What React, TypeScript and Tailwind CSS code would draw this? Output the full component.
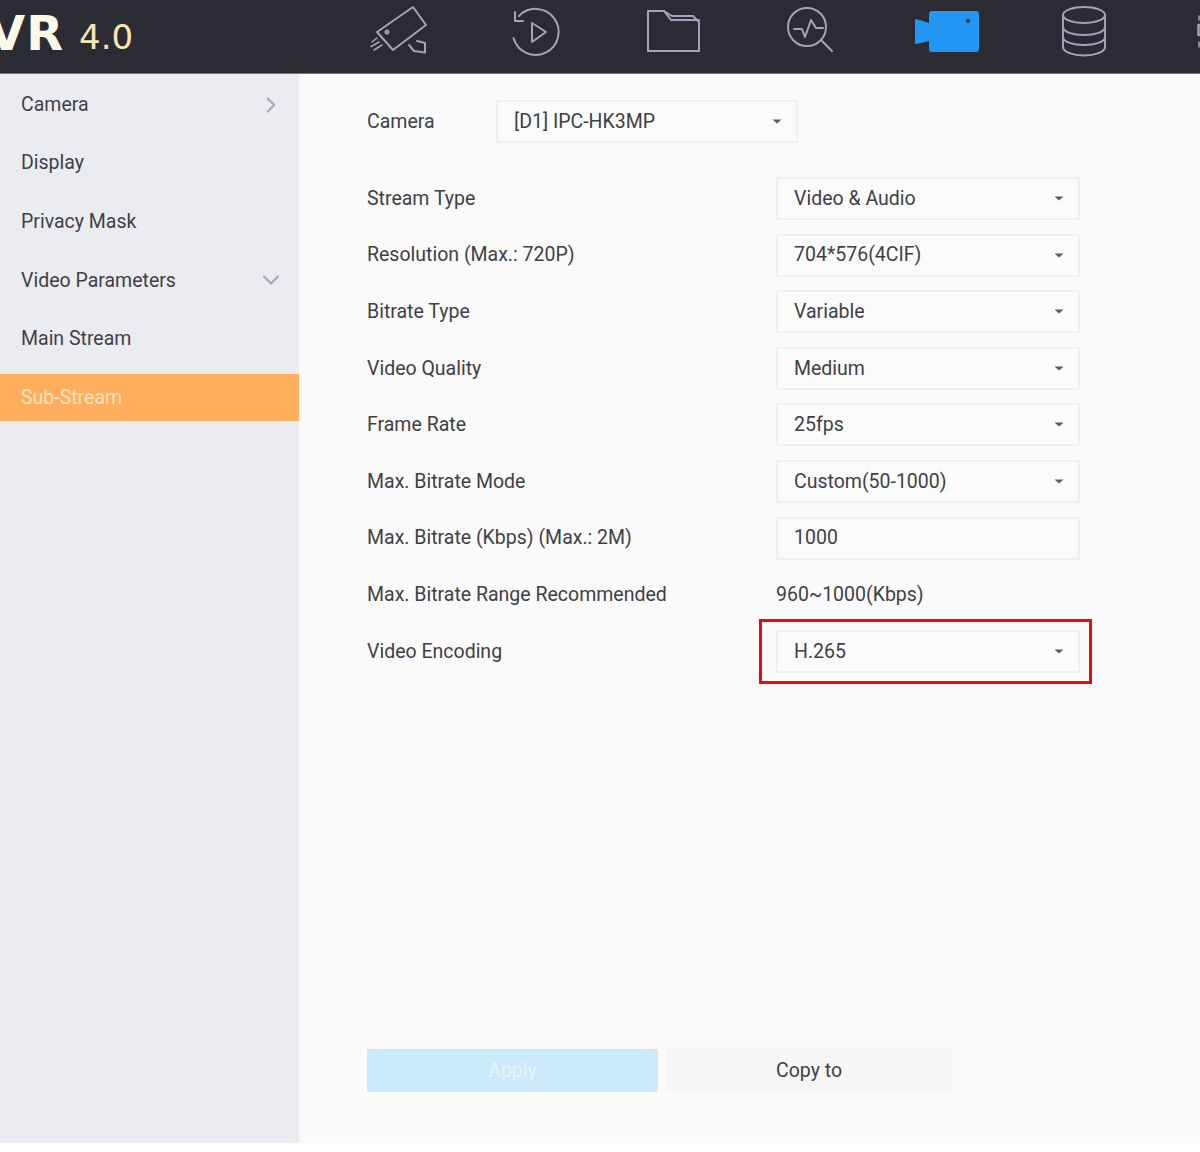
import React from "react";
import { ChevronRight, ChevronDown } from "lucide-react";

const S = "#a3a3ba";

function Cell({ cx, children }: { cx: number; children: React.ReactNode }) {
  return (
    <div className="w-[137px] h-[74px] shrink-0 flex items-center justify-center">
      <svg width="70" height="74" viewBox={`${cx - 35} 0 70 74`} fill="none" stroke={S} strokeWidth="2" strokeLinejoin="round" strokeLinecap="round">
        {children}
      </svg>
    </div>
  );
}

function Caret() {
  return (
    <svg width="10" height="5" viewBox="0 0 10 5" className="shrink-0">
      <path d="M0.5 0.5H9.5L5 4.5Z" fill="#5c5c63" />
    </svg>
  );
}

function Select({ value, caret = true, className }: { value: string; caret?: boolean; className: string }) {
  return (
    <div className={`h-[43px] flex items-center justify-between pl-[16px] pr-[14px] border-2 border-[#efefef] bg-[#fbfbfb] ${className}`}>
      <span>{value}</span>
      {caret && <Caret />}
    </div>
  );
}

const rows: [string, string, "select" | "input" | "text"][] = [
  ["Stream Type", "Video & Audio", "select"],
  ["Resolution (Max.: 720P)", "704*576(4CIF)", "select"],
  ["Bitrate Type", "Variable", "select"],
  ["Video Quality", "Medium", "select"],
  ["Frame Rate", "25fps", "select"],
  ["Max. Bitrate Mode", "Custom(50-1000)", "select"],
  ["Max. Bitrate (Kbps) (Max.: 2M)", "1000", "input"],
  ["Max. Bitrate Range Recommended", "960~1000(Kbps)", "text"],
];

const menu = ["Camera", "Display", "Privacy Mask", "Video Parameters", "Main Stream"];

export default function App() {
  return (
    <div className="w-[1200px] h-[1152px] bg-white flex flex-col overflow-hidden text-[#3f3f47] text-[19.5px] font-['Roboto','Liberation_Sans',sans-serif]">
      <header className="h-[74px] shrink-0 bg-[#2b2b33] border-b border-[#77777f] flex overflow-hidden">
        <div className="w-[330px] shrink-0 overflow-hidden flex items-center">
          <span className="ml-[-12px] text-[48px] leading-none font-bold text-[#fdf9e8] font-['DejaVu_Sans',sans-serif] tracking-[1px] mt-[-7px]">VR</span>
          <span className="ml-[15px] text-[34px] leading-none text-[#f9e4b8] font-['DejaVu_Sans',sans-serif]">4.0</span>
        </div>
        <Cell cx={398}>
          <path d="M376 32L412 7L425 25L392 50Z" />
          <circle cx="386" cy="32" r="1.5" />
          <path d="M408 45L413 51L424 52.500V43L416 41" />
          <path d="M371 42L376 38M370 46.500L378 42M373 50L381 45" strokeWidth="1.6" />
        </Cell>
        <Cell cx={536}>
          <path d="M519 16A23 23 0 1 1 513.500 38" />
          <path d="M515 12V21H523" />
          <path d="M532 23L546 32L532 42Z" />
        </Cell>
        <Cell cx={673}>
          <path d="M648 11H664L672 16H693L699 22V51H648Z" />
          <path d="M664 11L671 20H699" />
        </Cell>
        <Cell cx={809}>
          <circle cx="806" cy="27" r="19" />
          <path d="M821 41L831 51" />
          <path d="M793 29H801L804 37L810 20L815 28H822" />
        </Cell>
        <Cell cx={946}>
          <path d="M915 20L928 24V40L915 43Z" fill="#2196f3" stroke="#2196f3" />
          <rect x="928" y="11" width="50" height="41" rx="3" fill="#2196f3" stroke="none" />
          <circle cx="967" cy="21" r="2" fill="#24303f" stroke="none" />
        </Cell>
        <Cell cx={1083}>
          <ellipse cx="1083" cy="15" rx="21" ry="8" />
          <path d="M1062 15V47C1062 52 1072 55.500 1083 55.500C1094 55.500 1104 52 1104 47V15" />
          <path d="M1062 27C1062 32 1072 35 1083 35C1094 35 1104 32 1104 27" />
          <path d="M1062 37C1062 42 1072 45 1083 45C1094 45 1104 42 1104 37" />
        </Cell>
        <Cell cx={1220}>
          <path d="M1197.500 25V35M1197.500 25H1203M1197.500 35H1203" strokeWidth="2.500" />
          <path d="M1198 16V20M1198 42V47" strokeWidth="1.500" />
        </Cell>
      </header>

      <div className="h-[1069px] shrink-0 flex">
        <aside className="w-[299px] shrink-0 bg-[#ebebf2] pt-[7px] flex flex-col gap-[11.6px]">
          {menu.map((m, i) => (
            <div key={m} className="h-[47px] flex items-center justify-between pl-[21px] pr-[14px]">
              <span>{m}</span>
              {i === 0 && <ChevronRight size={26} color="#a9a9b3" strokeWidth={2} className="mr-[1px]" />}
              {i === 3 && <ChevronDown size={28} color="#a9a9b3" strokeWidth={2} />}
            </div>
          ))}
          <div className="h-[47px] flex items-center pl-[21px] bg-[#ffae5e] text-[#fde3bb]">Sub-Stream</div>
        </aside>

        <main className="flex-1 bg-[#fafafa] pl-[68px] pt-[26px] pb-[51px] flex flex-col">
          <div className="flex items-center h-[43px]">
            <span className="w-[129px]">Camera</span>
            <Select value="[D1] IPC-HK3MP" className="w-[302px]" />
          </div>
          <div className="mt-[34px] flex flex-col gap-[13.6px]">
            {rows.map(([label, value, kind]) => (
              <div key={label} className="flex items-center h-[43px]">
                <span className="w-[409px]">{label}</span>
                {kind === "text" ? (
                  <span>{value}</span>
                ) : (
                  <Select value={value} caret={kind === "select"} className="w-[304px]" />
                )}
              </div>
            ))}
            <div className="flex items-center h-[43px]">
              <span className="w-[409px]">Video Encoding</span>
              <div className="relative w-[304px]">
                <Select value="H.265" className="w-full" />
                <div className="absolute left-[-17px] right-[-12px] top-[-11px] bottom-[-11px] border-[3px] border-[#dd0f15]" />
              </div>
            </div>
          </div>
          <div className="mt-auto flex gap-[8px]">
            <div className="w-[291px] h-[43px] bg-[#cdeafc] text-[#e6f5fe] flex items-center justify-center">Apply</div>
            <div className="w-[286px] h-[43px] bg-[#f6f6f6] flex items-center justify-center">Copy to</div>
          </div>
        </main>
      </div>
    </div>
  );
}
